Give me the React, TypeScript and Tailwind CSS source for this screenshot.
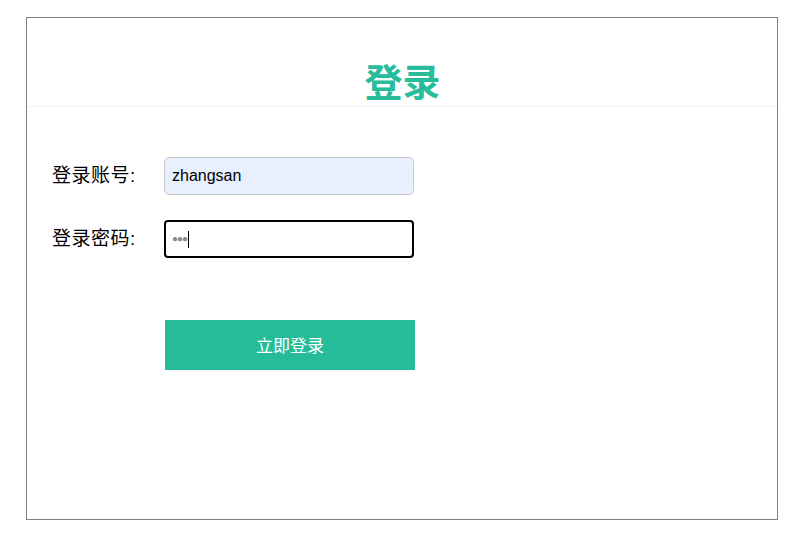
export default function App() {
  return (
    <div className="min-h-screen bg-white pt-[17px] pl-[26px]" style={{ fontFamily: '"Liberation Sans", "Noto Sans CJK SC", sans-serif' }}>
      <div className="w-[752px] h-[503px] border border-[#808080] bg-white">
        <div className="h-[89px] border-b border-[#f0f2f2] flex items-end justify-center">
          <h1 className="text-[38px] font-bold leading-[46px] text-[#27bc9a] ml-[1px]">登录</h1>
        </div>

        <div className="pl-[25px] pt-[50px]">
          <div className="flex items-center h-[38px]">
            <label className="w-[112px] text-[19px] tracking-[0.5px] text-black">登录账号:</label>
            <div className="w-[250px] h-[38px] rounded-[5px] border border-[#c8c8c8] bg-[#e8f0fe] flex items-center px-[7px] text-[16px] text-black">
              zhangsan
            </div>
          </div>

          <div className="flex items-center h-[38px] mt-[25px]">
            <label className="w-[112px] text-[19px] tracking-[0.5px] text-black">登录密码:</label>
            <div className="w-[250px] h-[38px] rounded-[4px] border-2 border-black bg-white flex items-center px-[6px]">
              <span className="text-[10px] tracking-[-1px] text-[#8a8a8a] leading-none">●●●</span>
              <span className="ml-[1px] w-px h-[17px] bg-black" />
            </div>
          </div>

          <div className="pl-[113px] mt-[62px]">
            <button className="w-[250px] h-[50px] pt-[4px] bg-[#26bc9a] text-white text-[17px]">立即登录</button>
          </div>
        </div>
      </div>
    </div>
  );
}
